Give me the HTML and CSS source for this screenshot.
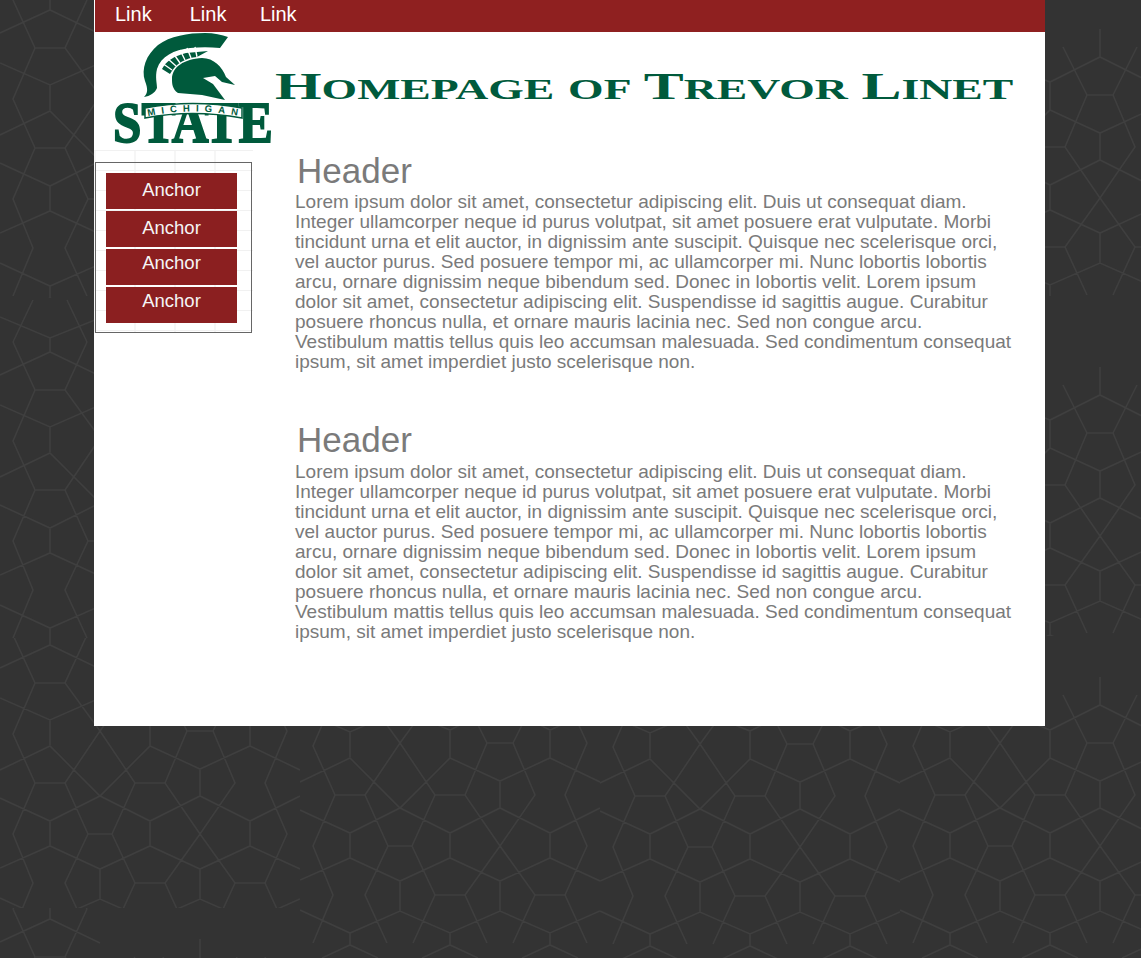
FILE: index.html
```html
<!DOCTYPE html>
<html>

<head>
    <meta charset="UTF-8">
    <title>Homepage of Trevor Linet</title>
    <link rel="stylesheet" href="styles.css">
</head>

<body>

    <!-- background pattern, pieced from one tile like the original image -->
    <svg class="backdrop" width="1141" height="958" viewBox="0 0 1141 958">
        <defs>
            <path id="tile" d="M50 22V8M0 -13L50 8L100 -12M33 -30L13 12M67 -30L87 12M0 45L50 22L100 46M0 75L50 97L100 75L150 95L200 70L250 95L300 73
                M50 97V122M150 95V123M250 95V123M200 42V70
                M0 147L50 123L100 173L150 123L200 146L250 123L300 147M200 146V173
                M0 175L50 198L100 173L150 198L200 173L250 198L300 173
                M50 198V223M150 198V223M250 198V223
                M0 245L50 223L100 246L150 223L200 246L250 223L300 246M100 246V276M200 246V276
                M0 275L50 298L100 276L150 298L200 276L250 298L300 276
                M50 298V310M150 298V310M250 298V310
                M22 323L50 310L78 323M122 323L150 310L178 323M222 323L250 310L278 323
                M13 12L35 60L13 111L35 160L13 211L33 260L13 308M35 60H65
                M87 12L65 60L100 108L135 160M135 60L100 108L65 160
                M35 160H65L88 211H112L135 160H165L200 211L235 260H265L287 308
                M88 211L65 260L87 308M112 211L135 260H165L187 308M135 260L113 308
                M165 260L200 211L235 160L213 108H187L165 160M235 260L213 308
                M265 60L287 108L265 160L287 211L265 260M187 108L163 60M213 108L237 60" />
        </defs>
        <svg x="0" y="0" width="300" height="298" viewBox="0 12 300 298"><use href="#tile" class="tile" /></svg>
        <svg x="0" y="298" width="300" height="340" viewBox="0 -32 300 340"><use href="#tile" class="tile" /></svg>
        <svg x="0" y="638" width="300" height="270" viewBox="0 15 300 270"><use href="#tile" class="tile" /></svg>
        <svg x="0" y="908" width="300" height="50" viewBox="0 11 300 50"><use href="#tile" class="tile" /></svg>
        <svg x="300" y="726" width="300" height="232" viewBox="0 91 300 232"><use href="#tile" class="tile" /></svg>
        <svg x="600" y="726" width="300" height="232" viewBox="0 90 300 232"><use href="#tile" class="tile" /></svg>
        <svg x="900" y="0" width="241" height="296" viewBox="0 13 241 296"><use href="#tile" class="tile" /></svg>
        <svg x="900" y="296" width="241" height="340" viewBox="0 -29 241 340"><use href="#tile" class="tile" /></svg>
        <svg x="900" y="636" width="241" height="322" viewBox="0 1 241 322"><use href="#tile" class="tile" /></svg>
    </svg>

    <div class="page">
        <nav class="topnav">
            <a class="topnav-link" href="#">Link</a>
            <a class="topnav-link" href="#">Link</a>
            <a class="topnav-link topnav-link-last" href="#">Link</a>
        </nav>

        <header class="masthead">
            <svg class="logo" width="161" height="124" viewBox="0 0 161 124">
                <path class="logo-fill" d="M32 64C36 60 36 56 33 48C29 36 34 22 46 12C58 3 76 0 93 0C102 0 110 2 116 4L108 15C98 14 88 14 78 15C62 17 49 23 45 36C43 44 45 50 45 55C43 60 38 63 32 64Z" />
                <path class="logo-fill" d="M50 36C54 28 62 23 74 20L96 18L85 24C74 25 64 30 58 41Z" />
                <path class="logo-plume" d="M50 30L60 37M55 25L64 33M61 20L68 30M68 17L73 27M75 15L79 25M83 14L85 24" />
                <path class="logo-fill" d="M60 46C60 34 72 26 90 25C102 25 110 34 114 44L123 52L110 49L103 43L91 45L101 51L113 67L90 62L66 60C60 56 60 50 60 46Z" />
                <text class="logo-state" transform="translate(1 109) scale(.88 1)">STATE</text>
                <path class="logo-band" d="M33 75Q80 66 130 75V85Q80 76 33 85Z" />
                <path id="logo-arc" class="logo-arc" d="M36 83Q80 74 128 83" />
                <text class="logo-michigan"><textPath href="#logo-arc" textLength="90">MICHIGAN</textPath></text>
            </svg>
            <h1 class="site-title"><span class="site-title-cap">H</span>omepage of <span class="site-title-cap">T</span>revor <span class="site-title-cap">L</span>inet</h1>
        </header>

        <div class="columns">
            <aside class="side">
                <div class="side-box">
                    <a class="side-link side-link-first" href="#">Anchor</a>
                    <a class="side-link" href="#">Anchor</a>
                    <a class="side-link side-link-high" href="#">Anchor</a>
                    <a class="side-link side-link-high" href="#">Anchor</a>
                </div>
            </aside>

            <main class="content">
                <section class="block">
                    <h2 class="block-title">Header</h2>
                    <p class="block-text">Lorem ipsum dolor sit amet, consectetur adipiscing elit. Duis ut consequat diam.<br>
                        Integer ullamcorper neque id purus volutpat, sit amet posuere erat vulputate. Morbi<br>
                        tincidunt urna et elit auctor, in dignissim ante suscipit. Quisque nec scelerisque orci,<br>
                        vel auctor purus. Sed posuere tempor mi, ac ullamcorper mi. Nunc lobortis lobortis<br>
                        arcu, ornare dignissim neque bibendum sed. Donec in lobortis velit. Lorem ipsum<br>
                        dolor sit amet, consectetur adipiscing elit. Suspendisse id sagittis augue. Curabitur<br>
                        posuere rhoncus nulla, et ornare mauris lacinia nec. Sed non congue arcu.<br>
                        Vestibulum mattis tellus quis leo accumsan malesuada. Sed condimentum consequat<br>
                        ipsum, sit amet imperdiet justo scelerisque non.</p>
                </section>
                <section class="block">
                    <h2 class="block-title block-title-up">Header</h2>
                    <p class="block-text">Lorem ipsum dolor sit amet, consectetur adipiscing elit. Duis ut consequat diam.<br>
                        Integer ullamcorper neque id purus volutpat, sit amet posuere erat vulputate. Morbi<br>
                        tincidunt urna et elit auctor, in dignissim ante suscipit. Quisque nec scelerisque orci,<br>
                        vel auctor purus. Sed posuere tempor mi, ac ullamcorper mi. Nunc lobortis lobortis<br>
                        arcu, ornare dignissim neque bibendum sed. Donec in lobortis velit. Lorem ipsum<br>
                        dolor sit amet, consectetur adipiscing elit. Suspendisse id sagittis augue. Curabitur<br>
                        posuere rhoncus nulla, et ornare mauris lacinia nec. Sed non congue arcu.<br>
                        Vestibulum mattis tellus quis leo accumsan malesuada. Sed condimentum consequat<br>
                        ipsum, sit amet imperdiet justo scelerisque non.</p>
                </section>
            </main>
        </div>
    </div>

</body>

</html>
```

FILE: styles.css
```css
html {
    background-color: #333;
}

body {
    font-family: "Liberation Sans", Arial, sans-serif;
    background-color: #333;
    color: #7a7a7a;
    margin: 0;
    height: 958px;
    overflow: hidden;
}

.backdrop {
    position: absolute;
    top: 0;
    left: 0;
}

.tile {
    fill: none;
    stroke: #3f3f3f;
    stroke-width: 1.6;
}

.page {
    position: relative;
    width: 951px;
    height: 726px;
    margin-left: 94px;
    background-color: #fff;
}

.topnav {
    display: flex;
    height: 32px;
    margin-left: 1px;
    padding-left: 20px;
    background-color: #8f2020;
}

.topnav-link {
    margin-right: 38px;
    color: #fff;
    font-size: 20px;
    line-height: 29px;
    text-decoration: none;
}

.topnav-link-last {
    margin-left: -4.5px;
}

.masthead {
    display: flex;
    align-items: flex-start;
    height: 118px;
}

.logo {
    flex: none;
    margin: 1px 0 0 18px;
}

.logo-fill {
    fill: #005a3c;
}

.logo-plume {
    fill: none;
    stroke: #fff;
    stroke-width: 1.4;
}

.logo-state {
    fill: #005a3c;
    stroke: #005a3c;
    stroke-width: 1.8;
    font-family: "Liberation Serif", serif;
    font-size: 58px;
    font-weight: bold;
}

.logo-band {
    fill: #fff;
    stroke: #005a3c;
    stroke-width: 1.5;
}

.logo-arc {
    fill: none;
}

.logo-michigan {
    fill: #005a3c;
    font-family: "Liberation Sans", sans-serif;
    font-size: 9.5px;
    font-weight: bold;
}

.site-title {
    flex: none;
    margin: 32px 0 0 2px;
    color: #005a3c;
    font-family: "Liberation Serif", serif;
    font-size: 29px;
    font-weight: bold;
    line-height: 44px;
    text-transform: uppercase;
    word-spacing: 1.5px;
    white-space: nowrap;
    transform: scaleX(1.576);
    transform-origin: left center;
}

.site-title-cap {
    font-size: 38px;
}

.columns {
    display: flex;
    align-items: flex-start;
}

.side {
    flex: none;
    width: 159px;
    height: 183px;
    box-sizing: border-box;
    padding: 12px 0 0 1px;
    background-image:
        repeating-linear-gradient(to bottom, #f1f1f1 0, #f1f1f1 1px, transparent 1px, transparent 20px),
        repeating-linear-gradient(to right, #f6f6f6 0, #f6f6f6 2px, transparent 2px, transparent 40px);
}

.side-box {
    display: flex;
    flex-direction: column;
    gap: 2px;
    width: 157px;
    height: 171px;
    box-sizing: border-box;
    padding: 10px 0 0 10px;
    border: 1px solid #666;
}

.side-link {
    display: block;
    width: 131px;
    height: 36px;
    background-color: #8b1f20;
    color: #f5f5f5;
    font-size: 18.5px;
    line-height: 33px;
    text-align: center;
    text-decoration: none;
}

.side-link-first {
    line-height: 34px;
}

.side-link-high {
    line-height: 27px;
}

.content {
    width: 722px;
    margin-left: 42px;
}

.block {
    height: 270px;
}

.block-title {
    margin: 0 0 0 2px;
    color: #7a7a7a;
    font-size: 35px;
    font-weight: normal;
    line-height: 42px;
}

.block-title-up {
    margin-top: -1px;
    margin-bottom: 1px;
}

.block-text {
    margin: 0;
    font-size: 19px;
    line-height: 20px;
    white-space: nowrap;
}
```
